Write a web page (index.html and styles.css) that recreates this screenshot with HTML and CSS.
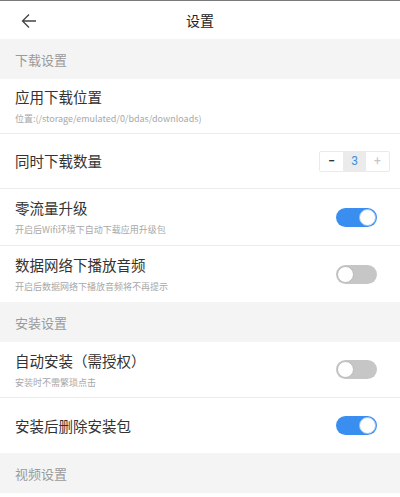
FILE: index.html
```html
<!DOCTYPE html>
<html lang="zh">
<head>
<meta charset="utf-8">
<link rel="stylesheet" href="styles.css">
</head>
<body>
<div class="page">
  <div class="topline"></div>
  <header class="navbar">
    <span class="back">
      <svg width="16" height="16" viewBox="0 0 16 16"><path d="M15 8H1.5M8 1.5L1.5 8L8 14.5" fill="none" stroke="#444" stroke-width="1.3"/></svg>
    </span>
    <h1 class="title">设置</h1>
  </header>

  <div class="section">下载设置</div>
  <div class="row">
    <div class="text">
      <div class="label">应用下载位置</div>
      <div class="desc">位置:(/storage/emulated/0/bdas/downloads)</div>
    </div>
  </div>
  <div class="row">
    <div class="text"><div class="label">同时下载数量</div></div>
    <div class="stepper"><span class="minus">−</span><span class="num">3</span><span class="plus">+</span></div>
  </div>
  <div class="row tall">
    <div class="text">
      <div class="label">零流量升级</div>
      <div class="desc">开启后Wifi环境下自动下载应用升级包</div>
    </div>
    <span class="toggle on"></span>
  </div>
  <div class="row mid last">
    <div class="text">
      <div class="label">数据网络下播放音频</div>
      <div class="desc">开启后数据网络下播放音频将不再提示</div>
    </div>
    <span class="toggle"></span>
  </div>

  <div class="section">安装设置</div>
  <div class="row mid">
    <div class="text">
      <div class="label">自动安装（需授权）</div>
      <div class="desc">安装时不需繁琐点击</div>
    </div>
    <span class="toggle"></span>
  </div>
  <div class="row last">
    <div class="text"><div class="label">安装后删除安装包</div></div>
    <span class="toggle on"></span>
  </div>

  <div class="section">视频设置</div>
</div>
</body>
</html>
```

FILE: styles.css
```css
html, body {
  margin: 0;
  padding: 0;
  background: #fff;
}
body {
  font-family: "Noto Sans CJK SC", "Roboto", sans-serif;
  color: #333;
}
.page {
  width: 400px;
  height: 497px;
  overflow: hidden;
  display: flex;
  flex-direction: column;
}
.topline {
  height: 1px;
  background: #7a7a7a;
  flex: none;
}
.navbar {
  height: 38px;
  flex: none;
  display: flex;
  align-items: center;
  justify-content: center;
  position: relative;
}
.back {
  position: absolute;
  left: 21px;
  top: 12px;
  width: 16px;
  height: 16px;
  display: flex;
}
.title {
  margin: 0;
  font-size: 14px;
  font-weight: 400;
  color: #222;
  line-height: 1;
}
.section {
  flex: none;
  height: 40px;
  background: #f4f4f4;
  color: #9a9a9a;
  font-size: 13px;
  display: flex;
  align-items: center;
  padding-left: 15px;
}
.row {
  flex: none;
  height: 55px;
  box-sizing: border-box;
  border-bottom: 1px solid #ececec;
  display: flex;
  align-items: center;
  padding: 0 23px 0 15px;
}
.row.tall {
  height: 57px;
}
.row.mid {
  height: 56px;
}
.row.last {
  border-bottom: none;
}
.text {
  flex: 1;
  display: flex;
  flex-direction: column;
}
.label {
  font-size: 14.5px;
  line-height: 20px;
  color: #333;
}
.desc {
  font-size: 9px;
  line-height: 13px;
  color: #a8a8a8;
  margin-top: 5px;
}
.stepper {
  display: flex;
  height: 19px;
  border: 1px solid #eaeaea;
  border-radius: 2px;
  margin-right: -13px;
  font-family: "Roboto", sans-serif;
}
.stepper span {
  width: 23px;
  display: flex;
  align-items: center;
  justify-content: center;
  font-size: 12px;
}
.minus {
  color: #333;
  font-weight: 700;
}
.num {
  background: #ebebeb;
  color: #3d8fe0;
}
.plus {
  color: #c4c4c4;
}
.toggle {
  width: 41px;
  height: 19px;
  border-radius: 10px;
  background: #c6c6c6;
  position: relative;
  flex: none;
}
.toggle::after {
  content: "";
  position: absolute;
  top: 1px;
  left: 1px;
  width: 17px;
  height: 17px;
  box-sizing: border-box;
  border-radius: 50%;
  background: #fff;
  border: 1px solid #b8b8b8;
}
.toggle.on {
  background: #3a8ef0;
}
.toggle.on::after {
  left: 23px;
  border-color: #9fc4ee;
  background: #fff;
}
```
